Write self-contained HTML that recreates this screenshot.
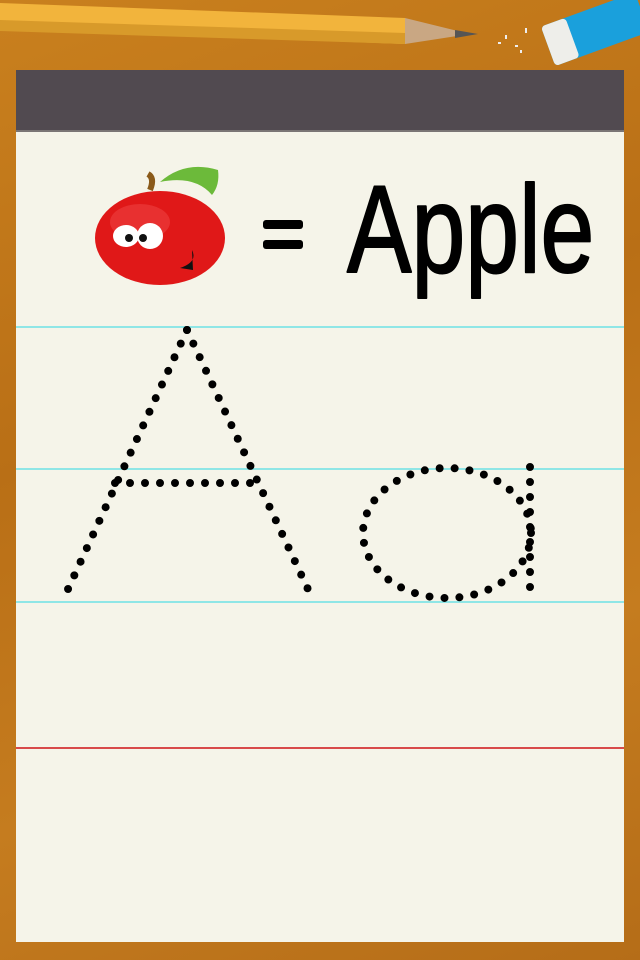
<!DOCTYPE html>
<html><head><meta charset="utf-8"><style>
html,body{margin:0;padding:0;width:640px;height:960px;overflow:hidden}
body{background:linear-gradient(160deg,#c9801e,#b96f16 40%,#c57c1f 70%,#b56d18);position:relative;font-family:"Liberation Sans",sans-serif}
.paper{position:absolute;left:16px;top:70px;width:608px;height:872px;background:#f5f4e9}
.hdr{position:absolute;left:0;top:0;width:608px;height:60px;background:#514a50;border-bottom:2px solid #7a7575}
.line{position:absolute;left:0;width:608px;height:2px}
</style></head><body>
<svg width="640" height="70" style="position:absolute;left:0;top:0">
<polygon points="0,3 405,18 405,44 0,29" fill="#f2b43c"/>
<polygon points="0,20 405,33 405,44 0,31" fill="#d89a2a"/>
<polygon points="405,18 470,34 405,44" fill="#c9a783"/>
<polygon points="455,30 478,34 455,38" fill="#555"/>
<g transform="rotate(-20 590 30)"><rect x="545" y="10" width="100" height="42" rx="4" fill="#1aa0dc"/><rect x="545" y="10" width="26" height="42" rx="4" fill="#eeeeea"/></g>
<g fill="#eee"><rect x="505" y="35" width="2" height="4"/><rect x="515" y="45" width="3" height="2"/><rect x="525" y="28" width="2" height="5"/><rect x="498" y="42" width="3" height="2"/><rect x="520" y="50" width="2" height="3"/></g>
</svg>
<div class="paper">
<div class="hdr"></div>
<div class="line" style="top:256px;background:#8fe6e6"></div>
<div class="line" style="top:398px;background:#8fe6e6"></div>
<div class="line" style="top:531px;background:#8fe6e6"></div>
<div class="line" style="top:677px;background:#d84a4a"></div>
</div>
<svg width="640" height="960" style="position:absolute;left:0;top:0">
<path d="M150,190 Q155,178 148,174" stroke="#8a5a1a" stroke-width="6" fill="none"/>
<path d="M160,182 Q185,160 218,170 Q220,185 212,195 Q195,175 160,182Z" fill="#6cba3a"/>
<ellipse cx="160" cy="238" rx="65" ry="47" fill="#e01818"/>
<ellipse cx="140" cy="222" rx="30" ry="18" fill="#f04848" opacity=".5"/>
<ellipse cx="126" cy="236" rx="13" ry="11" fill="#fff"/><ellipse cx="150" cy="236" rx="13" ry="13" fill="#fff"/>
<circle cx="129" cy="238" r="4" fill="#111"/><circle cx="143" cy="238" r="4" fill="#111"/>
<path d="M180,268 Q198,262 192,250 L193,270Z" fill="#111"/>
<rect x="263" y="220" width="40" height="9" rx="3" fill="#000"/>
<rect x="263" y="240" width="40" height="9" rx="3" fill="#000"/>
<text x="347" y="272" font-size="124" font-family="Liberation Sans, sans-serif" transform="translate(347 0) scale(0.78 1) translate(-347 0)" fill="#000" stroke="#000" stroke-width="2" stroke-linejoin="round">Apple</text>
<g stroke="#000" stroke-width="8" stroke-linecap="round" stroke-dasharray="0 15" fill="none">
<path d="M187,330 L63,600"/><path d="M187,330 L313,600"/><path d="M115,483 L262,483"/>
<ellipse cx="447" cy="533" rx="84" ry="65"/><path d="M530,467 L530,600"/>
</g>
</svg>
</body></html>
